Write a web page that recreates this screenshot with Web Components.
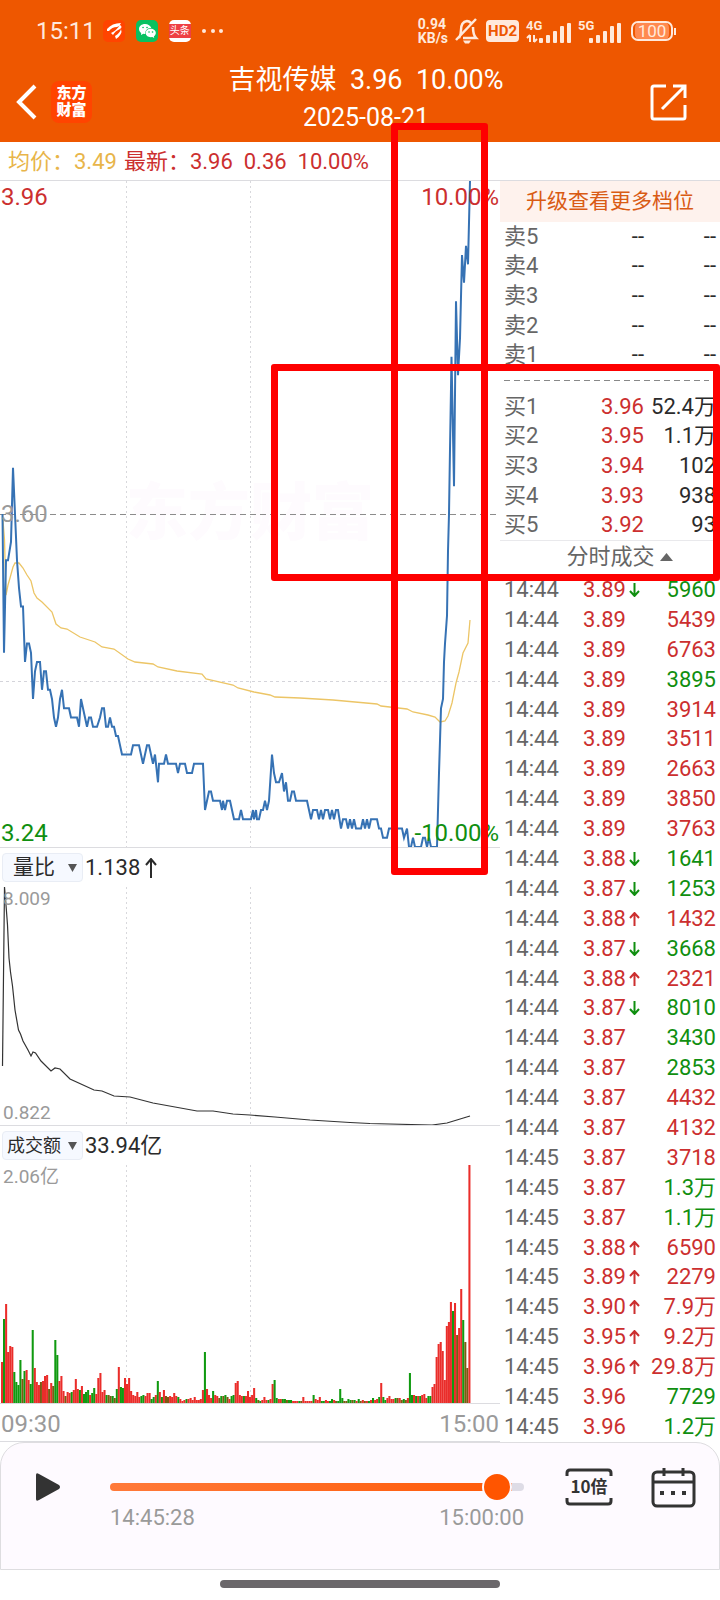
<!DOCTYPE html>
<html lang="zh-CN">
<head>
<meta charset="utf-8">
<meta name="viewport" content="width=device-width, initial-scale=1">
<title>吉视传媒 分时</title>
<style>
  body {
    margin: 0;
    background: #fff;
    color: #2b2b2b;
    font: 22px/30px Roboto, "Noto Sans CJK SC", sans-serif;
    --orange: #ee5700;
    --red: #cc2f2f;
    --green: #108f10;
    --grey: #9a9a9a;
    --line: #dcdce0;
  }
</style>
</head>
<body>

<stock-page>
  <status-bar slot="top" time="15:11"></status-bar>
  <app-header slot="top">
    <span slot="title">吉视传媒&nbsp; 3.96&nbsp; 10.00%</span>
    <span slot="date">2025-08-21</span>
  </app-header>
  <quote-line slot="top">
    <span slot="average">均价：3.49</span>
    <span slot="latest">最新：3.96&nbsp; 0.36&nbsp; 10.00%</span>
  </quote-line>

  <price-chart slot="charts"></price-chart>
  <indicator-panel slot="charts" name="量比" other="换手率" value="1.138" rising>
    <ratio-chart></ratio-chart>
  </indicator-panel>
  <indicator-panel slot="charts" name="成交额" other="成交量" value="33.94亿">
    <amount-chart></amount-chart>
  </indicator-panel>
  <time-axis slot="charts"><span>09:30</span><span>15:00</span></time-axis>

  <order-book slot="side"></order-book>
  <trade-list slot="side"></trade-list>

  <replay-bar slot="bottom">
    <span slot="from">14:45:28</span>
    <span slot="to">15:00:00</span>
  </replay-bar>

  <mark-box slot="marks" style="left:391px;top:123px;width:97px;height:752px"></mark-box>
  <mark-box slot="marks" style="left:271px;top:364px;right:0;height:217px"></mark-box>
</stock-page>

<script>
(function() {

  // registers an element whose shadow root is filled by render(host)
  function define(name, render, ready) {
    customElements.define(name, class extends HTMLElement {
      constructor() {
        super();
        this.attachShadow({ mode: 'open' });
      }
      connectedCallback() {
        this.shadowRoot.innerHTML = render(this);
        if (ready) ready(this.shadowRoot, this);
      }
    });
  }

  const vertical = (height) => `
    <path d="M126.5 0V${ height }M250.5 0V${ height }" fill="none"
      stroke="#d8d8dc" stroke-dasharray="2 3"/>`;

  const chartStyle = `
    :host {
      display: grid;
      box-sizing: border-box;
      border-bottom: 1px solid var(--line);
      overflow: hidden;
    }
    svg, .label { grid-area: 1 / 1; }
    svg { width: 100%; height: 100%; min-height: 0; }
    .label { align-self: start; justify-self: start; z-index: 1; }
    .end { justify-self: end; }
    .low { align-self: end; }
    .mid { align-self: center; }
  `;

  define('stock-page', () => `
    <style>
      :host { display: block; position: relative; min-height: 100vh; }
      main {
        display: grid;
        grid-template-columns: minmax(0, 25fr) minmax(0, 11fr);
      }
      .side { display: flex; flex-direction: column; min-width: 0; }
      footer { display: flex; justify-content: center; padding: 10px 0 13px; }
      .home { width: 39%; height: 8px; border-radius: 4px; background: #6b686b; }
    </style>
    <slot name="top"></slot>
    <main>
      <div><slot name="charts"></slot></div>
      <div class="side"><slot name="side"></slot></div>
    </main>
    <slot name="bottom"></slot>
    <footer><div class="home"></div></footer>
    <slot name="marks"></slot>
  `);

  const bars = (x) => [5, 8, 12, 17, 20].map((h, i) =>
    `<rect x="${ x + i * 7 }" y="${ 24 - h }" width="4" height="${ h }" rx="1"/>`).join('');

  define('status-bar', (host) => `
    <style>
      :host {
        display: flex;
        align-items: center;
        height: 62px;
        padding: 0 44px 0 36px;
        gap: 11px;
        background: var(--orange);
        color: #ffe9dc;
        fill: #ffe9dc;
      }
      .time { font-size: 24px; margin-right: -4px; }
      .app { width: 22px; height: 22px; border-radius: 5px; flex: none; }
      .app svg { display: block; }
      .flash { background: #ff4400; }
      .chat { background: #07c160; }
      .news {
        background: linear-gradient(#fff 4px, #ee4044 4px 18px, #fff 18px);
        color: #fff;
        font-size: 10px;
        line-height: 22px;
        text-align: center;
      }
      .right { display: flex; align-items: center; gap: 7px; margin-left: auto; }
      .speed { font-weight: 700; font-size: 14px; line-height: 14px; }
      .hd {
        padding: 0 2px;
        border-radius: 4px;
        background: #ffe9dc;
        color: var(--orange);
        font: 700 15px/22px Roboto, sans-serif;
      }
      .net { display: grid; font: 700 13px/14px Roboto, sans-serif; }
      .net > * { grid-area: 1 / 1; align-self: start; justify-self: start; }
      .battery { display: flex; align-items: center; margin-left: 2px; }
      .level {
        width: 34px;
        padding: 0 2px;
        border: 2px solid #ffe9dc;
        border-radius: 7px;
        background: #ff8950;
        background-clip: content-box;
        font-size: 17px;
        line-height: 16px;
        text-align: center;
      }
      .tip { width: 2px; height: 7px; margin-left: 1px; background: #ffe9dc; }
    </style>
    <span class="time">${ host.getAttribute('time') }</span>
    <span class="app flash"><svg width="22" height="22" viewBox="0 0 22 22">
      <path d="M4 9Q9 3 18 3Q17 6 14 7Q9 7 6 11L4 11ZM8 13Q14 10 17 5Q20 7 17 9Q12 11 10 15ZM12 16Q17 13 18 9Q20 14 13 19Z" fill="#fff"/>
    </svg></span>
    <span class="app chat"><svg width="22" height="22" viewBox="0 0 22 22">
      <path d="M9 4C5.500 4 3 6.300 3 9c0 1.700.9 3 2.200 4L5 15l2.300-1.200q1 .2 2 .1C9 10 12 8 15.300 8 14.700 5.700 12 4 9 4Z" fill="#fff"/>
      <path d="M14.700 8.800c-2.800 0-5 1.900-5 4.200s2.200 4.200 5 4.200l1.600-.2 1.900 1-.3-1.700c1.200-.8 1.900-2 1.900-3.300 0-2.300-2.300-4.200-5.100-4.200Z" fill="#fff"/>
      <path d="M7 7.500h.1M11 7.500h.1M13 12h.1M16.500 12h.1" stroke="#07c160" stroke-width="1.600" stroke-linecap="round"/>
    </svg></span>
    <span class="app news">头条</span>
    <svg width="24" height="6"><circle cx="2" cy="3" r="2"/><circle cx="11" cy="3" r="2"/><circle cx="19" cy="3" r="2"/></svg>
    <div class="right">
      <div class="speed">0.94<br>KB/s</div>
      <svg width="24" height="26" viewBox="0 0 24 26">
        <path d="M4 20Q6 17 6 12Q6 4 12 3Q14 3 16 5M18 9Q18 17 21 20H8M1 22L21 1" fill="none" stroke="#ffe9dc" stroke-width="2.500"/>
        <path d="M8 22.500h8l-2 3h-4Z"/>
      </svg>
      <span class="hd">HD2</span>
      <div class="net">
        <span>4G</span>
        <svg width="45" height="24" viewBox="0 0 45 24">
          <path d="M4 16V23M8 16V23M1 19L4 16M8 23L11 20" fill="none" stroke="#ffe9dc" stroke-width="2"/>
          ${ bars(13) }
        </svg>
      </div>
      <div class="net">
        <span>5G</span>
        <svg width="44" height="24" viewBox="0 0 44 24">${ bars(11) }</svg>
      </div>
      <span class="battery"><span class="level">100</span><i class="tip"></i></span>
    </div>
  `);

  define('app-header', () => `
    <style>
      :host {
        display: flex;
        align-items: center;
        height: 80px;
        background: var(--orange);
        color: #fff;
      }
      button { display: block; border: 0; padding: 0; background: none; }
      svg { display: block; fill: none; stroke: #fff; }
      .left { display: flex; gap: 14px; width: 76px; padding-left: 16px; align-items: center; }
      .logo {
        width: 41px;
        padding: 4px 0;
        border-radius: 8px;
        background: #ff4400;
        font-size: 15px;
        font-weight: 900;
        line-height: 17px;
        text-align: center;
      }
      .center { flex: 1; padding-bottom: 6px; text-align: center; }
      .title { font-size: 27px; line-height: 37px; }
      .date { font-size: 25px; line-height: 37px; }
      .right { width: 70px; padding-left: 10px; }
    </style>
    <div class="left">
      <button aria-label="返回"><svg width="21" height="36" viewBox="0 0 21 36"><path d="M19 2L3 18L19 34" stroke-width="4"/></svg></button>
      <div class="logo">东方<br>财富</div>
    </div>
    <div class="center">
      <div class="title"><slot name="title"></slot></div>
      <div class="date"><slot name="date"></slot></div>
    </div>
    <div class="right">
      <button aria-label="分享"><svg width="37" height="37" viewBox="0 0 37 37">
        <path d="M16 2H4Q2 2 2 4V33Q2 35 4 35H33Q35 35 35 33V21M23 2H35V14M35 2L12 25" stroke-width="3"/>
      </svg></button>
    </div>
  `);

  define('quote-line', () => `
    <style>
      :host {
        display: flex;
        align-items: flex-end;
        gap: 7px;
        height: 38px;
        padding: 0 8px;
        border-bottom: 1px solid var(--line);
        font-size: 22px;
        line-height: 36px;
        white-space: nowrap;
      }
      .average { color: #e8b54a; }
      .latest { color: var(--red); }
    </style>
    <span class="average"><slot name="average"></slot></span>
    <span class="latest"><slot name="latest"></slot></span>
  `);

  // price line: x position and ticks of 0.01 above the lower limit of 3.24
  const price = `2.5:36 4:21 6:31 8:31 11:33 13:41 15:36 17:31 19:28 21:26 23:26 25:20 27:22 29:22
    31:21 33:16 35:19 37:20 40:20 42:17 44:19 46:19 48:17 50:17 52:16 54:14 56:13 58:14 60:16
    62:17 64:15 69:15 71:14 77:14 79:13 81:16 83:15 85:14 87:13 89:14 91:14 93:13 97:13 100:14
    102:15 104:15 106:13 108:13 110:14 112:13 114:13 116:12 118:12 120:11 122:10 131:10 133:11
    139:11 141:10 143:9 145:10 147:11 149:11 151:10 153:9 155:10 158:7 159:9 164:9 166:10 168:9
    176:9 178:8 180:9 185:9 187:8 192:8 194:9 203:9 205:4 207:5 209:6 211:6 213:5 220:5 222:4
    223:5 225:4 227:5 230:5 232:4 234:3 239:3 241:4 243:3 251:3 253:4 254:3 256:4 257:3 259:3
    261:4 263:4 265:5 267:4 269:5 272:10 274:8 276:7 279:7 282:8 284:6 286:7 288:5 290:5 292:6
    294:6 296:5 307:5 309:4 311:3 313:4 317:4 319:3 321:4 323:3 325:4 328:4 330:3 332:4 334:3
    336:4 338:4 341:2 343:3 346:3 348:2 350:3 352:2 354:3 356:2 361:2 363:3 365:2 367:3 369:2
    371:3 377:3 379:2 381:2 383:1 387:1 389:2 397:2 399:2 402:2 404:1 407:2 409:0 411:0 413:1
    415:0 421:0 423:1 425:1 427:0 429:1 431:0 437:0 439:8 441:15 443:16 444:20 445:22 447:25
    448:32 449:36 450:43 451.5:53 454:39 456:59 458:51 460:55 462:64 464:61 466:65 468:63 470:72`
    .trim().split(/\s+/)
    .map((pair) => {
      const [x, ticks] = pair.split(':');
      return `${ x },${ (666 - ticks * 9.25).toFixed(1) }`;
    })
    .join(' ');

  const average = `2.5,333 4.5,359 6,414 8,404 10,397 13,386 15,382 19,382 23,387 27,394 31,400
    34,412 37,417 42,421 52,431 56,443 61,447 67,448 80,456 95,461 102,466 114,468 128,478
    135,481 153,483 158,486 177,490 202,493 206,498 233,504 238,507 254,511 270,514 275,516
    300,517 333,519 377,523 381,525 407,528 413,531 428,534 435,536 440,541 445,540 448,535
    452,522 456,502 459,491 463,472 468,462 470,439`;

  define('price-chart', () => `
    <style>
      ${ chartStyle }
      :host { height: 667px; font-size: 24px; line-height: 32px; }
      .label { padding: 0 1px; }
      .up { color: var(--red); }
      .down { color: var(--green); line-height: 28px; }
      .mid { color: var(--grey); }
      .mark {
        grid-area: 1 / 1;
        place-self: center;
        color: #fefbfe;
        font-size: 62px;
        font-weight: 900;
        line-height: 62px;
      }
    </style>
    <span class="mark" aria-hidden="true">东方财富</span>
    <svg viewBox="0 0 500 666" preserveAspectRatio="none">
      ${ vertical(666) }
      <path d="M0 500.500H500" stroke="#d4d4da" stroke-dasharray="3 3"/>
      <path d="M0 333.500H500" stroke="#8c8c8c" stroke-dasharray="6 4"/>
      <polyline points="${ average }" fill="none" stroke="#ecc566" stroke-width="1.300"/>
      <polyline points="${ price }" fill="none" stroke="#3672b4" stroke-width="2"/>
    </svg>
    <span class="label up">3.96</span>
    <span class="label up end">10.00%</span>
    <span class="label mid">3.60</span>
    <span class="label down low">3.24</span>
    <span class="label down low end">-10.00%</span>
  `);

  define('indicator-panel', (host) => `
    <style>
      :host { display: block; }
      .head { display: flex; align-items: center; gap: 2px; height: 39px; padding-left: 2px; }
      .pick {
        display: grid;
        align-items: center;
        box-sizing: border-box;
        width: 81px;
        height: 29px;
        border: 1px solid #e9edf5;
        border-radius: 4px;
        background: #f6f9ff;
      }
      .pick > * { grid-area: 1 / 1; }
      select {
        appearance: none;
        width: 100%;
        height: 27px;
        margin: 0;
        border: 0;
        padding: 0 17px 0 0;
        background: none;
        color: inherit;
        font: inherit;
        font-size: 21px;
        line-height: 27px;
        text-align: center;
      }
      select.long { font-size: 18px; }
      .pick svg { justify-self: end; margin-right: 5px; fill: #555; pointer-events: none; }
      .value svg { margin-left: 5px; vertical-align: -3px; fill: none; stroke: #2b2b2b; stroke-width: 2; }
    </style>
    <div class="head">
      <label class="pick">
        <select aria-label="指标" class="${ host.getAttribute('name').length > 2 ? 'long' : '' }">
          <option>${ host.getAttribute('name') }</option>
          <option>${ host.getAttribute('other') }</option>
        </select>
        <svg width="9" height="8"><path d="M0 0H9L4.500 8Z"/></svg>
      </label>
      <span class="value">${ host.getAttribute('value') }${ host.hasAttribute('rising')
        ? '<svg width="12" height="20"><path d="M6 20V2M1 7L6 1L11 7"/></svg>' : '' }</span>
    </div>
    <slot></slot>
  `);

  define('ratio-chart', () => `
    <style>
      ${ chartStyle }
      :host { height: 239px; color: var(--grey); font-size: 19px; line-height: 24px; }
      .label { padding: 0 3px; }
    </style>
    <svg viewBox="0 0 500 238" preserveAspectRatio="none">
      ${ vertical(238) }
      <polyline fill="none" stroke="#333" stroke-width="1.200" points="2.5,179 4.5,0 6,18 7.500,38
        9,71 10.500,85 12.500,99 15,123 18.500,143 20.500,147 23,154 28,163 31,169 33,165 35.500,166
        41,174 51,184 55,181 60,182 70,192 94,203 102,204 114,209 130,210 153,216 197,224 213,224
        233,227 250,228 275,230 310,233 350,235.500 370,236.500 432,238 447,236 470,229"/>
    </svg>
    <span class="label">8.009</span>
    <span class="label low">0.822</span>
  `);

  // one bar a minute, keyed by first minute: r rising, g falling, b a blend of both
  const amounts = {
    0: `r41 g84 r99 r51 r57 r56 g31 g21 g18 g43 b24 g32 r33 r23 g19 g73 r35 r21 r18 b21 r22 r27
      r28 b14 r20 b17 g63 g48 r22 r27 r12 b7 r11 r10 g11 r13 r24 r14 g13 r17 g9 g11 g13 r8 g10 g15
      r9 r25 r30 r11 r13 g8 b8 b7 g7 b5 g14 r36 g16 g15 r25 r19 r25 r12 r8 r7 r11 r6 g7 g8 r7 r10
      r10 g4 g6 r8 g22 r11 g6 r13 b7 b6 r7 r6 r10 r7 g6 r4 r2 r3 g4 r4 r5 r3 r6 r3 r3 r4 r13`,
    99: `g51 r14 r8 r5 g12 r8 r7 b5 g7 b7 g8 b6 r4 g7 g8 r20 r22 r8 r7 g7 r7 r12 r6 r8 r15 g5 b3 g2
      r3 r6 r3 g3 r4 r19`,
    133: `g23 g5 r4 r4 g4 g4 b3 g3 g3 r2 r2 r2 g2 b2 r6 r2 r2 r2 r2 g8 r4 r3 r6 g2 g2 r3 r2 g2 g4 r3
      b2 g2`,
    165: `g14 g5 b2 b2 g4 g3 b3 g3 r2 g4 b2 r3 b2 r2 g2 r3 g5 r3 r4 g6`,
    185: `r20 g6 g3 r5 r7 r4 r4 g5 b5 r5 b3 g4 b3 r5`,
    199: `g30 g8 r8 g7 r7 g7 r8 r9 r5 g7 g7`,
    210: `r16 r19 r46 r59 r61 r52 r23 r77 r81 r101 g92 r100 b68 r75 r114 g83 b61 b35 r239`
  };
  const fills = { r: '#ea2d2a', g: '#109a10', b: '#7c5a12' };

  function amountBars() {
    return Object.keys(amounts).map((start) =>
      amounts[start].trim().split(/\s+/).map((bar, index) => {
        const height = +bar.slice(1);
        const x = (1 + (+start + index) * 2.05).toFixed(1);
        return `<rect x="${ x }" y="${ 238 - height }" width="2.050" height="${ height }" fill="${ fills[bar[0]] }"/>`;
      }).join('')
    ).join('');
  }

  define('amount-chart', () => `
    <style>
      ${ chartStyle }
      :host { height: 239px; color: var(--grey); font-size: 19px; line-height: 24px; }
      .label { padding: 0 3px; }
    </style>
    <svg viewBox="0 0 500 238" preserveAspectRatio="none">
      ${ vertical(238) }
      ${ amountBars() }
    </svg>
    <span class="label">2.06亿</span>
  `);

  define('time-axis', () => `
    <style>
      :host {
        display: flex;
        justify-content: space-between;
        height: 37px;
        padding: 0 1px;
        border-bottom: 1px solid var(--line);
        color: var(--grey);
        font-size: 24px;
        line-height: 40px;
      }
    </style>
    <slot></slot>
  `);

  const tableStyle = `
    :host { display: flex; flex-direction: column; }
    table {
      width: 100%;
      border-collapse: collapse;
      table-layout: fixed;
      line-height: 24px;
    }
    td, th {
      padding: 0;
      color: #2b2b2b;
      font-weight: 400;
      text-align: right;
      white-space: nowrap;
    }
    th { padding-left: 4px; color: #666; text-align: left; }
    td:last-child { padding-right: 4px; }
    td.red { color: var(--red); }
    td.green { color: var(--green); }
  `;

  const orders = (rows) => `
    <table>
      <colgroup><col><col style="width:70px"><col style="width:76px"></colgroup>
      ${ rows.map(([name, cost, amount]) => `<tr>
        <th scope="row">${ name }</th>
        <td class="${ cost === '--' ? '' : 'red' }">${ cost }</td>
        <td>${ amount }</td>
      </tr>`).join('') }
    </table>`;

  define('order-book', () => `
    <style>
      ${ tableStyle }
      table { height: 148px; }
      a {
        background: #fef2ed;
        color: #d95b14;
        font-size: 21px;
        line-height: 41px;
        text-align: center;
        text-decoration: none;
      }
      hr {
        width: 205px;
        height: 1px;
        margin: 10px 4px 11px;
        border: 0;
        background: repeating-linear-gradient(90deg, #888 0 6px, transparent 6px 10px);
      }
      button {
        display: flex;
        align-items: center;
        justify-content: center;
        gap: 5px;
        height: 35px;
        padding: 0 0 3px 19px;
        border: 0;
        border-top: 1px solid #e9e9ec;
        background: none;
        color: #666;
        font: inherit;
      }
      button svg { fill: #666; }
    </style>
    <a href="#levels">升级查看更多档位</a>
    ${ orders([['卖5', '--', '--'], ['卖4', '--', '--'], ['卖3', '--', '--'], ['卖2', '--', '--'], ['卖1', '--', '--']]) }
    <hr>
    ${ orders([['买1', '3.96', '52.4万'], ['买2', '3.95', '1.1万'], ['买3', '3.94', '102'], ['买4', '3.93', '938'], ['买5', '3.92', '93']]) }
    <button>分时成交<svg width="13" height="8"><path d="M0 8H13L6.500 0Z"/></svg></button>
  `);

  // time, price, price move (d down, u up, - none), amount, side
  const trades = `14:44 3.89 d 5960 g|14:44 3.89 - 5439 r|14:44 3.89 - 6763 r|14:44 3.89 - 3895 g
    |14:44 3.89 - 3914 r|14:44 3.89 - 3511 r|14:44 3.89 - 2663 r|14:44 3.89 - 3850 r
    |14:44 3.89 - 3763 r|14:44 3.88 d 1641 g|14:44 3.87 d 1253 g|14:44 3.88 u 1432 r
    |14:44 3.87 d 3668 g|14:44 3.88 u 2321 r|14:44 3.87 d 8010 g|14:44 3.87 - 3430 g
    |14:44 3.87 - 2853 g|14:44 3.87 - 4432 r|14:44 3.87 - 4132 r|14:45 3.87 - 3718 r
    |14:45 3.87 - 1.3万 g|14:45 3.87 - 1.1万 g|14:45 3.88 u 6590 r|14:45 3.89 u 2279 r
    |14:45 3.90 u 7.9万 r|14:45 3.95 u 9.2万 r|14:45 3.96 u 29.8万 r|14:45 3.96 - 7729 g
    |14:45 3.96 - 1.2万 g`.split('|').map((row) => row.trim().split(' '));

  const arrows = {
    u: '<svg width="11" height="14"><path d="M5.500 14V2M1 6L5.500 1L10 6"/></svg>',
    d: '<svg width="11" height="14"><path d="M5.500 0V12M1 8L5.500 13L10 8"/></svg>',
    '-': ''
  };

  define('trade-list', () => `
    <style>
      ${ tableStyle }
      :host { flex: 1; }
      table { flex: 1; height: 100%; }
      td svg { display: block; margin-left: 3px; fill: none; stroke: currentColor; stroke-width: 2; }
    </style>
    <table>
      <colgroup><col><col style="width:62px"><col style="width:15px"><col style="width:79px"></colgroup>
      ${ trades.map(([time, cost, move, amount, side]) => `<tr>
        <th scope="row">${ time }</th>
        <td class="red">${ cost }</td>
        <td class="${ move === 'd' ? 'green' : 'red' }">${ arrows[move] }</td>
        <td class="${ side === 'g' ? 'green' : 'red' }">${ amount }</td>
      </tr>`).join('') }
    </table>
  `);

  define('replay-bar', () => `
    <style>
      :host {
        display: flex;
        align-items: flex-start;
        box-sizing: border-box;
        height: 128px;
        padding: 25px 23px 0 34px;
        border: 1px solid #dedde0;
        border-radius: 24px 24px 0 0;
        background: #fefaff;
        color: var(--grey);
      }
      button { padding: 0; border: 0; background: none; }
      svg { display: block; }
      .play { margin: 4px 49px 0 0; }
      .track { flex: 1; }
      .times { display: flex; justify-content: space-between; line-height: 24px; }
      input {
        appearance: none;
        display: block;
        width: 100%;
        height: 38px;
        margin: 0;
        background: none;
      }
      input::-webkit-slider-runnable-track {
        height: 8px;
        border-radius: 4px;
        background: linear-gradient(90deg, #ff7a3a, #ff5a08 var(--done), #dedce6 var(--done));
      }
      input::-webkit-slider-thumb {
        appearance: none;
        box-sizing: border-box;
        width: 30px;
        height: 30px;
        margin-top: -11px;
        border: 2px solid #fefaff;
        border-radius: 50%;
        background: #ff5500;
      }
      .speed { margin: 0 38px 0 41px; }
      .speed text { font: 700 17px "Noto Sans CJK SC", sans-serif; fill: #333; }
      .line { fill: none; stroke: #333; stroke-width: 3; }
    </style>
    <button class="play" aria-label="播放"><svg width="26" height="30"><path d="M1 3Q1 0 4 2L24 13Q26 15 24 17L4 28Q1 30 1 27Z" fill="#333"/></svg></button>
    <div class="track">
      <input type="range" aria-label="回放进度" min="0" max="100" value="97">
      <div class="times"><slot name="from"></slot><slot name="to"></slot></div>
    </div>
    <button class="speed" aria-label="播放速度"><svg width="48" height="38" viewBox="0 0 48 38">
      <path class="line" d="M2 8V5Q2 2 5 2H43Q46 2 46 5V8M2 30V33Q2 36 5 36H43Q46 36 46 33V30"/>
      <text x="24" y="25" text-anchor="middle">10倍</text>
    </svg></button>
    <button aria-label="选择日期"><svg width="45" height="40" viewBox="0 0 45 40">
      <rect class="line" x="2" y="4" width="41" height="34" rx="4"/>
      <path class="line" d="M2 14H43M13 0V8M32 0V8"/>
      <path d="M9 23h4v4H9ZM20 23h4v4h-4ZM31 23h4v4h-4Z" fill="#333"/>
    </svg></button>
  `, (root) => {
    const input = root.querySelector('input');
    const paint = () => input.style.setProperty('--done', `${ input.value }%`);
    input.addEventListener('input', paint);
    paint();
  });

  define('mark-box', () => `
    <style>
      :host {
        position: absolute;
        box-sizing: border-box;
        border: 7px solid #fe0000;
        border-radius: 3px;
        pointer-events: none;
        z-index: 2;
      }
    </style>
  `);

}());
</script>
</body>
</html>
